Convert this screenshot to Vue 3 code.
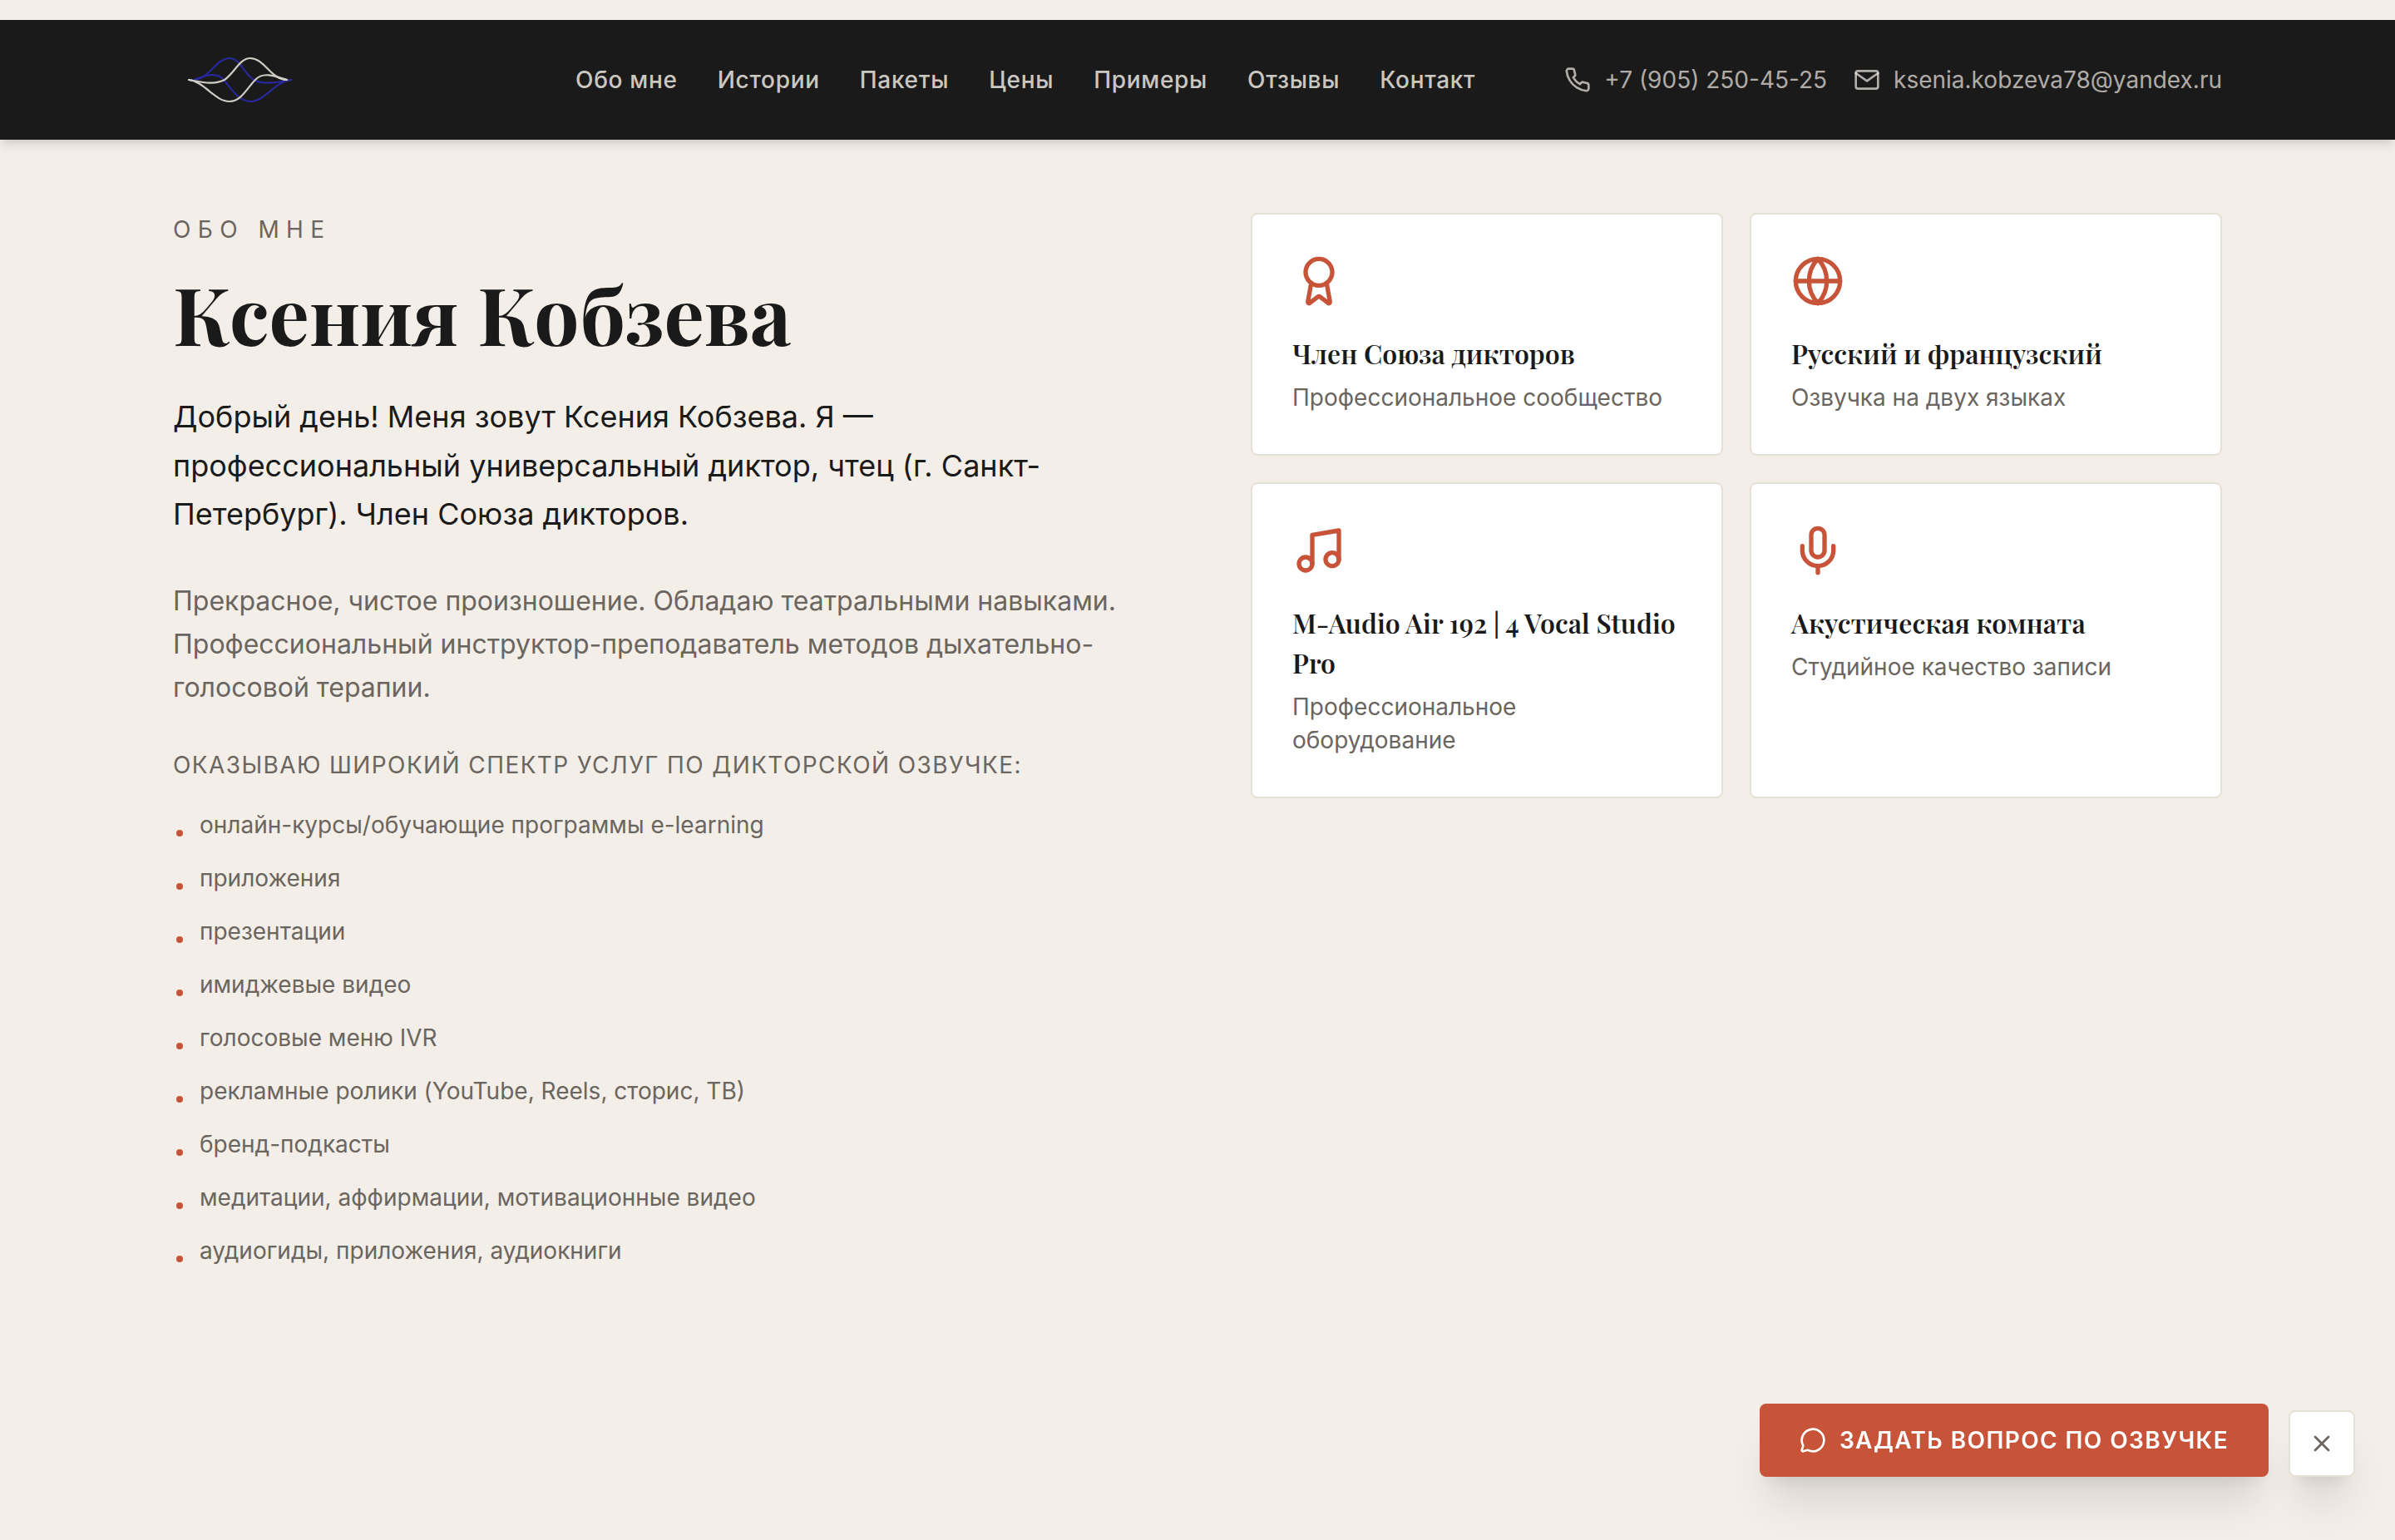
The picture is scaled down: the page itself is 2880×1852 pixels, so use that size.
<template>
  <div class="page">
    <header class="header">
      <div class="header-inner">
        <svg class="logo" viewBox="-2 0 160 72" fill="none" stroke-width="2.2" stroke-linecap="round">
          <g stroke="#28289a">
            <path d="M24 35.8C42 34 50 10 66 10C80 10 84 32 97 37C108 42 126 39 140 36" />
            <path d="M24 35.8C38 30 52 26 60 37C69 48 78 62 91 62C109 62 120 38 140 36" />
          </g>
          <g stroke="#d0cdc6">
            <path d="M17 36C30 38 46 43 60 36C72 28 78 10 91 10C108 10 116 36 135 36" />
            <path d="M17 36C36 38 48 62 66 62C80 62 87 46 97 36C106 26 120 31 135 36" />
          </g>
        </svg>
        <nav class="nav">
          <a v-for="link in links" :key="link" class="nav-link">{{ link }}</a>
        </nav>
        <div class="contacts">
          <a class="contact">
            <svg class="icon-sm" viewBox="0 0 24 24">
              <path d="M22 16.92v3a2 2 0 0 1-2.18 2 19.79 19.79 0 0 1-8.63-3.07 19.5 19.5 0 0 1-6-6 19.79 19.79 0 0 1-3.07-8.67A2 2 0 0 1 4.11 2h3a2 2 0 0 1 2 1.72 12.84 12.84 0 0 0 .7 2.81 2 2 0 0 1-.45 2.11L8.09 9.91a16 16 0 0 0 6 6l1.27-1.27a2 2 0 0 1 2.11-.45 12.84 12.84 0 0 0 2.81.7A2 2 0 0 1 22 16.92z" />
            </svg>
            <span>+7 (905) 250-45-25</span>
          </a>
          <a class="contact">
            <svg class="icon-sm" viewBox="0 0 24 24">
              <rect x="2" y="4" width="20" height="16" rx="2" />
              <path d="M22 6l-10 7L2 6" />
            </svg>
            <span>ksenia.kobzeva78@yandex.ru</span>
          </a>
        </div>
      </div>
    </header>

    <main class="about">
      <section class="about-text">
        <p class="label">Обо мне</p>
        <h1 class="title">Ксения Кобзева</h1>
        <p class="lead">
          Добрый день! Меня зовут Ксения Кобзева. Я — профессиональный универсальный диктор, чтец (г. Санкт-Петербург). Член Союза дикторов.
        </p>
        <p class="desc">
          Прекрасное, чистое произношение. Обладаю театральными навыками. Профессиональный инструктор-преподаватель методов дыхательно-голосовой терапии.
        </p>
        <p class="services-title">Оказываю широкий спектр услуг по дикторской озвучке:</p>
        <ul class="services">
          <li v-for="service in services" :key="service" class="service">{{ service }}</li>
        </ul>
      </section>

      <section class="cards">
        <div v-for="card in cards" :key="card.title" class="card">
          <svg class="card-icon" viewBox="0 0 24 24">
            <path v-for="d in card.paths" :key="d" :d="d" />
          </svg>
          <h3 class="card-title">{{ card.title }}</h3>
          <p class="card-text">{{ card.text }}</p>
        </div>
      </section>
    </main>

    <!-- Плавающая кнопка -->
    <div v-if="isAskVisible" class="ask">
      <button class="ask-button">
        <svg class="icon-sm" viewBox="0 0 24 24">
          <path d="M2.992 16.342a2 2 0 0 1 .094 1.167l-1.065 3.29a1 1 0 0 0 1.236 1.168l3.413-.998a2 2 0 0 1 1.099.092 10 10 0 1 0-4.777-4.719" />
        </svg>
        <span>Задать вопрос по озвучке</span>
      </button>
      <button class="ask-close" @click="isAskVisible = false">
        <svg class="icon-sm" viewBox="0 0 24 24">
          <path d="M18 6 6 18M6 6l12 12" />
        </svg>
      </button>
    </div>
  </div>
</template>

<script setup>
import { ref } from 'vue';

const isAskVisible = ref(true);

const links = ['Обо мне', 'Истории', 'Пакеты', 'Цены', 'Примеры', 'Отзывы', 'Контакт'];

const services = [
  'онлайн-курсы/обучающие программы e-learning',
  'приложения',
  'презентации',
  'имиджевые видео',
  'голосовые меню IVR',
  'рекламные ролики (YouTube, Reels, сторис, ТВ)',
  'бренд-подкасты',
  'медитации, аффирмации, мотивационные видео',
  'аудиогиды, приложения, аудиокниги',
];

const cards = [
  {
    title: 'Член Союза дикторов',
    text: 'Профессиональное сообщество',
    paths: [
      'm15.477 12.89 1.515 8.526a.5.5 0 0 1-.81.47l-3.58-2.687a1 1 0 0 0-1.197 0l-3.586 2.686a.5.5 0 0 1-.81-.469l1.514-8.526',
      'M18 8a6 6 0 1 1-12 0a6 6 0 1 1 12 0',
    ],
  },
  {
    title: 'Русский и французский',
    text: 'Озвучка на двух языках',
    paths: [
      'M22 12a10 10 0 1 1-20 0a10 10 0 1 1 20 0',
      'M12 2a14.5 14.5 0 0 0 0 20 14.5 14.5 0 0 0 0-20',
      'M2 12h20',
    ],
  },
  {
    title: 'M-Audio Air 192 | 4 Vocal Studio Pro',
    text: 'Профессиональное оборудование',
    paths: [
      'M9 18V5l12-2v13',
      'M9 18a3 3 0 1 1-6 0a3 3 0 1 1 6 0',
      'M21 16a3 3 0 1 1-6 0a3 3 0 1 1 6 0',
    ],
  },
  {
    title: 'Акустическая комната',
    text: 'Студийное качество записи',
    paths: [
      'M12 19v3',
      'M19 10v2a7 7 0 0 1-14 0v-2',
      'M12 2a3 3 0 0 1 3 3v7a3 3 0 0 1-6 0V5a3 3 0 0 1 3-3z',
    ],
  },
];
</script>

<style>
body {
  background: #f3eee7;
}
</style>

<style scoped>
.page {
  box-sizing: border-box;
  min-height: 1852px;
  padding-top: 24px;
  background: #f3eee7;
  color: #1a1a1a;
  font-family: Inter, "Liberation Sans", sans-serif;
  font-size: 28px;
  line-height: 40px;
}

p,
h1,
h3,
ul {
  margin: 0;
  padding: 0;
}

svg {
  display: block;
  flex-shrink: 0;
}

.header {
  background: #1a1a1a;
  box-shadow: 0 8px 12px -2px rgba(0, 0, 0, 0.1), 0 4px 8px -4px rgba(0, 0, 0, 0.1);
}

.header-inner {
  display: flex;
  align-items: center;
  height: 144px;
  padding: 0 208px;
}

.logo {
  width: 160px;
  height: 72px;
}

.nav {
  display: flex;
  gap: 48px;
  margin-left: auto;
  margin-right: 107px;
}

.nav-link {
  color: rgba(243, 238, 231, 0.83);
  font-weight: 500;
  letter-spacing: 0.7px;
}

.contacts {
  display: flex;
  gap: 32px;
}

.contact {
  display: flex;
  align-items: center;
  gap: 16px;
  color: rgba(243, 238, 231, 0.7);
}

.icon-sm {
  width: 32px;
  height: 32px;
  fill: none;
  stroke: currentColor;
  stroke-width: 2;
  stroke-linecap: round;
  stroke-linejoin: round;
}

.about {
  display: grid;
  grid-template-columns: 1fr 1fr;
  gap: 128px;
  align-items: start;
  padding: 88px 208px 0;
}

.label {
  color: #6b6560;
  letter-spacing: 8.4px;
  text-transform: uppercase;
}

.title {
  margin-top: 20px;
  font-family: "Playfair Display", "Liberation Serif", serif;
  font-size: 96px;
  font-weight: 700;
  line-height: 120px;
  white-space: nowrap;
}

.lead {
  margin-top: 36px;
  font-size: 36px;
  line-height: 58.5px;
}

.desc {
  margin-top: 49px;
  color: #6b6560;
  font-size: 32px;
  line-height: 52px;
}

.services-title {
  margin-top: 47px;
  color: #6b6560;
  letter-spacing: 1.4px;
  text-transform: uppercase;
}

.services {
  display: flex;
  flex-direction: column;
  gap: 24px;
  margin-top: 32px;
  list-style: none;
}

.service {
  display: flex;
  gap: 20px;
  padding-left: 4px;
  color: #6b6560;
}

.service::before {
  content: "";
  width: 8px;
  height: 8px;
  margin-top: 26px;
  border-radius: 50%;
  background: #c75439;
}

.cards {
  display: grid;
  grid-template-columns: 1fr 1fr;
  gap: 32px;
}

.card {
  padding: 48px;
  border: 2px solid #e5e0d8;
  border-radius: 8px;
  background: #fff;
}

.card-icon {
  width: 64px;
  height: 64px;
  fill: none;
  stroke: #c75439;
  stroke-width: 2;
  stroke-linecap: round;
  stroke-linejoin: round;
}

.card-title {
  margin-top: 31px;
  font-family: "Playfair Display", "Liberation Serif", serif;
  font-size: 32px;
  font-weight: 600;
  line-height: 48px;
}

.card-text {
  margin-top: 9px;
  color: #6b6560;
}

.ask {
  position: fixed;
  right: 48px;
  bottom: 76px;
  display: flex;
  align-items: flex-end;
  gap: 24px;
}

.ask-button,
.ask-close {
  display: flex;
  align-items: center;
  border-radius: 8px;
  box-shadow: 0 40px 50px -10px rgba(0, 0, 0, 0.1), 0 16px 20px -12px rgba(0, 0, 0, 0.1);
  cursor: pointer;
}

.ask-button {
  gap: 16px;
  height: 88px;
  padding: 0 48px;
  border: none;
  background: #c75439;
  color: #fff;
  font: 600 28px/40px Inter, "Liberation Sans", sans-serif;
  letter-spacing: 1.4px;
  text-transform: uppercase;
}

.ask-close {
  justify-content: center;
  width: 80px;
  height: 80px;
  padding: 0;
  border: 2px solid #e5e0d8;
  background: #fff;
  color: #6b6560;
}
</style>
